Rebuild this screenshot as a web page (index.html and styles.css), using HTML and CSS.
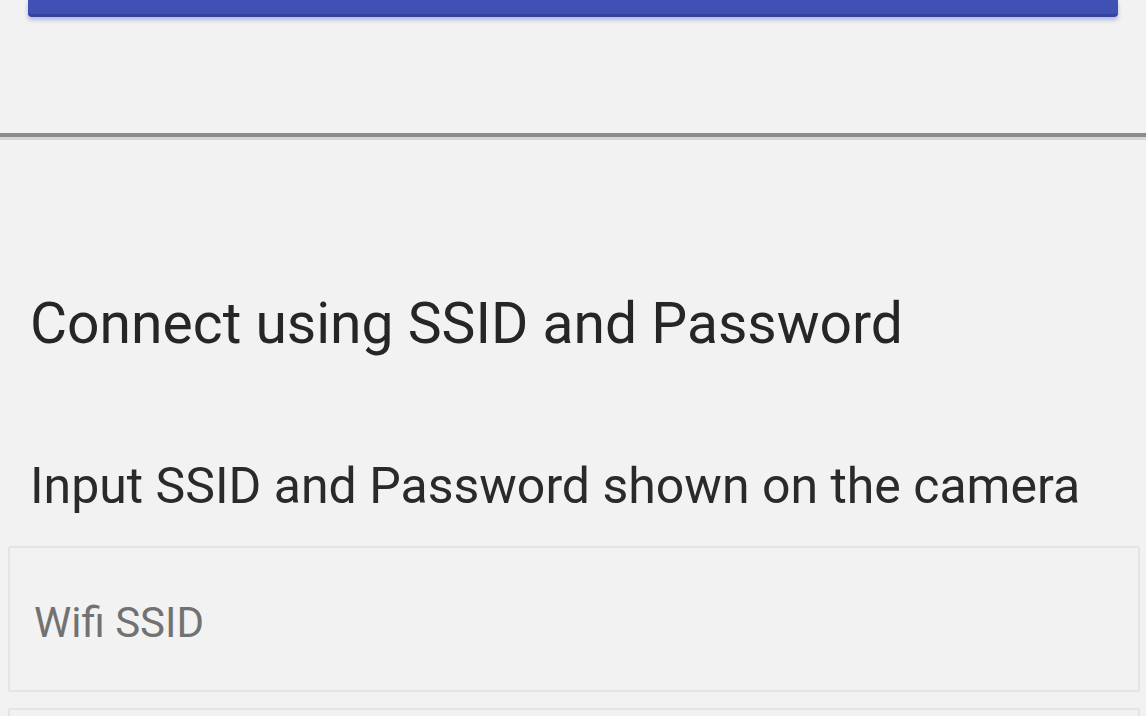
FILE: index.html
```html
<!DOCTYPE html>
<html lang="en">
<head>
<meta charset="utf-8">
<title>Connect</title>
<link rel="stylesheet" href="styles.css">
</head>
<body>
<div class="screen">
  <div class="top">
    <button class="primary" type="button"></button>
  </div>
  <div class="divider"></div>
  <section class="content">
    <h2 class="title">Connect using SSID and Password</h2>
    <p class="hint">Input SSID and Password shown on the camera</p>
    <div class="field"><input class="input" type="text" placeholder="Wifi SSID"></div>
    <div class="field"><input class="input" type="password" placeholder="Password"></div>
  </section>
</div>
</body>
</html>
```
FILE: styles.css
```css
html, body {
  margin: 0;
  padding: 0;
  background: #f2f2f2;
  overflow: hidden;
}
.screen {
  width: 1146px;
  height: 716px;
  overflow: hidden;
  font-family: Roboto, "Noto Sans", sans-serif;
  color: #222;
}
.top {
  height: 133px;
  padding: 0 28px;
  box-sizing: border-box;
}
.primary {
  display: block;
  width: 100%;
  height: 17px;
  margin: 0;
  border: 0;
  border-radius: 0 0 4px 4px;
  background: #3f51b5;
  border-bottom: 3px solid #34449e;
  box-shadow: 0 3px 4px rgba(60, 80, 180, 0.35);
}
.divider {
  height: 4px;
  background: #8c8c8c;
  border-bottom: 3px solid #d6d6d6;
}
.content {
  padding: 150px 0 0 0;
}
.title {
  margin: 0 0 0 30px;
  font-weight: 400;
  font-size: 57px;
  line-height: 67px;
  color: #262626;
}
.hint {
  margin: 100px 0 30px 30px;
  font-size: 50px;
  line-height: 59px;
  color: #2a2a2a;
}
.field {
  margin: 0 6px 16px 8px;
}
.input {
  display: block;
  width: 100%;
  box-sizing: border-box;
  height: 146px;
  border: 2px solid #e4e4e4;
  border-radius: 2px;
  background: #f2f2f2;
  padding: 6px 0 0 24px;
  font-family: Roboto, "Noto Sans", sans-serif;
  font-size: 42px;
  color: #333;
  outline: none;
}
.input::placeholder {
  color: #727272;
}
```
